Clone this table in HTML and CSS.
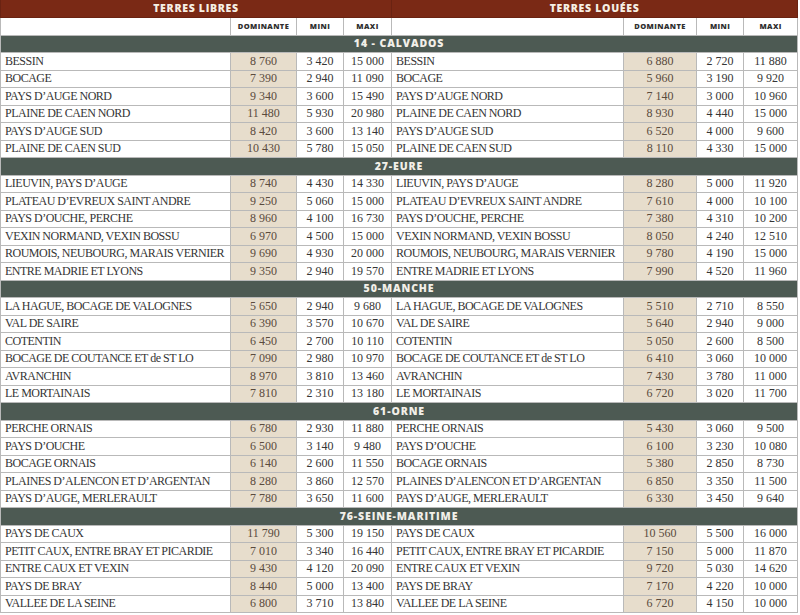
FILE: index.html
```html
<!DOCTYPE html>
<html lang="fr">
<head>
<meta charset="utf-8">
<title>Terres libres / Terres louées</title>
<link rel="stylesheet" href="styles.css">
</head>
<body>
<table class="sheet">
  <colgroup>
    <col class="c-name-l"><col class="c-dom-l"><col class="c-min-l"><col class="c-max-l">
    <col class="c-name-r"><col class="c-dom-r"><col class="c-min-r"><col class="c-max-r">
  </colgroup>
  <thead>
    <tr class="title"><th colspan="4">TERRES LIBRES</th><th colspan="4">TERRES LOUÉES</th></tr>
    <tr class="cols"><th></th><th>DOMINANTE</th><th>MINI</th><th>MAXI</th><th></th><th>DOMINANTE</th><th>MINI</th><th>MAXI</th></tr>
  </thead>
  <tbody>
    <tr class="section"><td colspan="8">14 - CALVADOS</td></tr>
    <tr><td>BESSIN</td><td class="dom">8 760</td><td>3 420</td><td>15 000</td><td>BESSIN</td><td class="dom">6 880</td><td>2 720</td><td>11 880</td></tr>
    <tr><td>BOCAGE</td><td class="dom">7 390</td><td>2 940</td><td>11 090</td><td>BOCAGE</td><td class="dom">5 960</td><td>3 190</td><td>9 920</td></tr>
    <tr><td>PAYS D’AUGE NORD</td><td class="dom">9 340</td><td>3 600</td><td>15 490</td><td>PAYS D’AUGE NORD</td><td class="dom">7 140</td><td>3 000</td><td>10 960</td></tr>
    <tr><td>PLAINE DE CAEN NORD</td><td class="dom">11 480</td><td>5 930</td><td>20 980</td><td>PLAINE DE CAEN NORD</td><td class="dom">8 930</td><td>4 440</td><td>15 000</td></tr>
    <tr><td>PAYS D’AUGE SUD</td><td class="dom">8 420</td><td>3 600</td><td>13 140</td><td>PAYS D’AUGE SUD</td><td class="dom">6 520</td><td>4 000</td><td>9 600</td></tr>
    <tr><td>PLAINE DE CAEN SUD</td><td class="dom">10 430</td><td>5 780</td><td>15 050</td><td>PLAINE DE CAEN SUD</td><td class="dom">8 110</td><td>4 330</td><td>15 000</td></tr>
    <tr class="section"><td colspan="8">27-EURE</td></tr>
    <tr><td>LIEUVIN, PAYS D’AUGE</td><td class="dom">8 740</td><td>4 430</td><td>14 330</td><td>LIEUVIN, PAYS D’AUGE</td><td class="dom">8 280</td><td>5 000</td><td>11 920</td></tr>
    <tr><td>PLATEAU D’EVREUX SAINT ANDRE</td><td class="dom">9 250</td><td>5 060</td><td>15 000</td><td>PLATEAU D’EVREUX SAINT ANDRE</td><td class="dom">7 610</td><td>4 000</td><td>10 100</td></tr>
    <tr><td>PAYS D’OUCHE, PERCHE</td><td class="dom">8 960</td><td>4 100</td><td>16 730</td><td>PAYS D’OUCHE, PERCHE</td><td class="dom">7 380</td><td>4 310</td><td>10 200</td></tr>
    <tr><td>VEXIN NORMAND, VEXIN BOSSU</td><td class="dom">6 970</td><td>4 500</td><td>15 000</td><td>VEXIN NORMAND, VEXIN BOSSU</td><td class="dom">8 050</td><td>4 240</td><td>12 510</td></tr>
    <tr><td>ROUMOIS, NEUBOURG, MARAIS VERNIER</td><td class="dom">9 690</td><td>4 930</td><td>20 000</td><td>ROUMOIS, NEUBOURG, MARAIS VERNIER</td><td class="dom">9 780</td><td>4 190</td><td>15 000</td></tr>
    <tr><td>ENTRE MADRIE ET LYONS</td><td class="dom">9 350</td><td>2 940</td><td>19 570</td><td>ENTRE MADRIE ET LYONS</td><td class="dom">7 990</td><td>4 520</td><td>11 960</td></tr>
    <tr class="section"><td colspan="8">50-MANCHE</td></tr>
    <tr><td>LA HAGUE, BOCAGE DE VALOGNES</td><td class="dom">5 650</td><td>2 940</td><td>9 680</td><td>LA HAGUE, BOCAGE DE VALOGNES</td><td class="dom">5 510</td><td>2 710</td><td>8 550</td></tr>
    <tr><td>VAL DE SAIRE</td><td class="dom">6 390</td><td>3 570</td><td>10 670</td><td>VAL DE SAIRE</td><td class="dom">5 640</td><td>2 940</td><td>9 000</td></tr>
    <tr><td>COTENTIN</td><td class="dom">6 450</td><td>2 700</td><td>10 110</td><td>COTENTIN</td><td class="dom">5 050</td><td>2 600</td><td>8 500</td></tr>
    <tr><td>BOCAGE DE COUTANCE ET de ST LO</td><td class="dom">7 090</td><td>2 980</td><td>10 970</td><td>BOCAGE DE COUTANCE ET de ST LO</td><td class="dom">6 410</td><td>3 060</td><td>10 000</td></tr>
    <tr><td>AVRANCHIN</td><td class="dom">8 970</td><td>3 810</td><td>13 460</td><td>AVRANCHIN</td><td class="dom">7 430</td><td>3 780</td><td>11 000</td></tr>
    <tr><td>LE MORTAINAIS</td><td class="dom">7 810</td><td>2 310</td><td>13 180</td><td>LE MORTAINAIS</td><td class="dom">6 720</td><td>3 020</td><td>11 700</td></tr>
    <tr class="section"><td colspan="8">61-ORNE</td></tr>
    <tr><td>PERCHE ORNAIS</td><td class="dom">6 780</td><td>2 930</td><td>11 880</td><td>PERCHE ORNAIS</td><td class="dom">5 430</td><td>3 060</td><td>9 500</td></tr>
    <tr><td>PAYS D’OUCHE</td><td class="dom">6 500</td><td>3 140</td><td>9 480</td><td>PAYS D’OUCHE</td><td class="dom">6 100</td><td>3 230</td><td>10 080</td></tr>
    <tr><td>BOCAGE ORNAIS</td><td class="dom">6 140</td><td>2 600</td><td>11 550</td><td>BOCAGE ORNAIS</td><td class="dom">5 380</td><td>2 850</td><td>8 730</td></tr>
    <tr><td>PLAINES D’ALENCON ET D’ARGENTAN</td><td class="dom">8 280</td><td>3 860</td><td>12 570</td><td>PLAINES D’ALENCON ET D’ARGENTAN</td><td class="dom">6 850</td><td>3 350</td><td>11 500</td></tr>
    <tr><td>PAYS D’AUGE, MERLERAULT</td><td class="dom">7 780</td><td>3 650</td><td>11 600</td><td>PAYS D’AUGE, MERLERAULT</td><td class="dom">6 330</td><td>3 450</td><td>9 640</td></tr>
    <tr class="section"><td colspan="8">76-SEINE-MARITIME</td></tr>
    <tr><td>PAYS DE CAUX</td><td class="dom">11 790</td><td>5 300</td><td>19 150</td><td>PAYS DE CAUX</td><td class="dom">10 560</td><td>5 500</td><td>16 000</td></tr>
    <tr><td>PETIT CAUX, ENTRE BRAY ET PICARDIE</td><td class="dom">7 010</td><td>3 340</td><td>16 440</td><td>PETIT CAUX, ENTRE BRAY ET PICARDIE</td><td class="dom">7 150</td><td>5 000</td><td>11 870</td></tr>
    <tr><td>ENTRE CAUX ET VEXIN</td><td class="dom">9 430</td><td>4 120</td><td>20 090</td><td>ENTRE CAUX ET VEXIN</td><td class="dom">9 720</td><td>5 030</td><td>14 620</td></tr>
    <tr><td>PAYS DE BRAY</td><td class="dom">8 440</td><td>5 000</td><td>13 400</td><td>PAYS DE BRAY</td><td class="dom">7 170</td><td>4 220</td><td>10 000</td></tr>
    <tr><td>VALLEE DE LA SEINE</td><td class="dom">6 800</td><td>3 710</td><td>13 840</td><td>VALLEE DE LA SEINE</td><td class="dom">6 720</td><td>4 150</td><td>10 000</td></tr>
  </tbody>
</table>
</body>
</html>
```

FILE: styles.css
```css
html, body {
  margin: 0;
  padding: 0;
  background: #ffffff;
}

.sheet {
  width: 797px;
  table-layout: fixed;
  border-collapse: collapse;
  font-family: "Liberation Serif", "Times New Roman", serif;
  color: #353535;
}

.c-name-l { width: 230px; }
.c-dom-l  { width: 66px; }
.c-min-l  { width: 47px; }
.c-max-l  { width: 48px; }
.c-name-r { width: 232px; }
.c-dom-r  { width: 73px; }
.c-min-r  { width: 47px; }
.c-max-r  { width: 54px; }

.sheet tr {
  height: 17.5px;
}

.sheet td,
.sheet th {
  border: 1px solid #b9b9b9;
  padding: 0;
  white-space: nowrap;
  overflow: hidden;
  line-height: 15px;
}

.sheet tbody td {
  font-size: 12px;
  text-align: center;
}

.sheet tbody td:nth-child(1),
.sheet tbody td:nth-child(5) {
  text-align: left;
  padding-left: 4px;
  letter-spacing: -0.5px;
}

.sheet tbody td.dom {
  background: #e7ddcc;
  color: #5a4b3d;
}

.title th {
  background: #7a2915;
  color: #f6efe4;
  font-family: "Open Sans", "DejaVu Sans", sans-serif;
  font-weight: 800;
  font-size: 10.5px;
  letter-spacing: 0.7px;
  border-color: #6a2312;
  border-top: none;
}

.cols th {
  background: #ffffff;
  color: #2f2f2f;
  font-family: "Open Sans", "DejaVu Sans", sans-serif;
  font-weight: 800;
  font-size: 7.5px;
  letter-spacing: 0.4px;
}

.sheet tbody tr.section td {
  background: #4d5a53;
  color: #f2efe8;
  text-align: center;
  padding-left: 0;
  font-family: "Open Sans", "DejaVu Sans", sans-serif;
  font-weight: 800;
  font-size: 10.5px;
  letter-spacing: 0.9px;
}
```
